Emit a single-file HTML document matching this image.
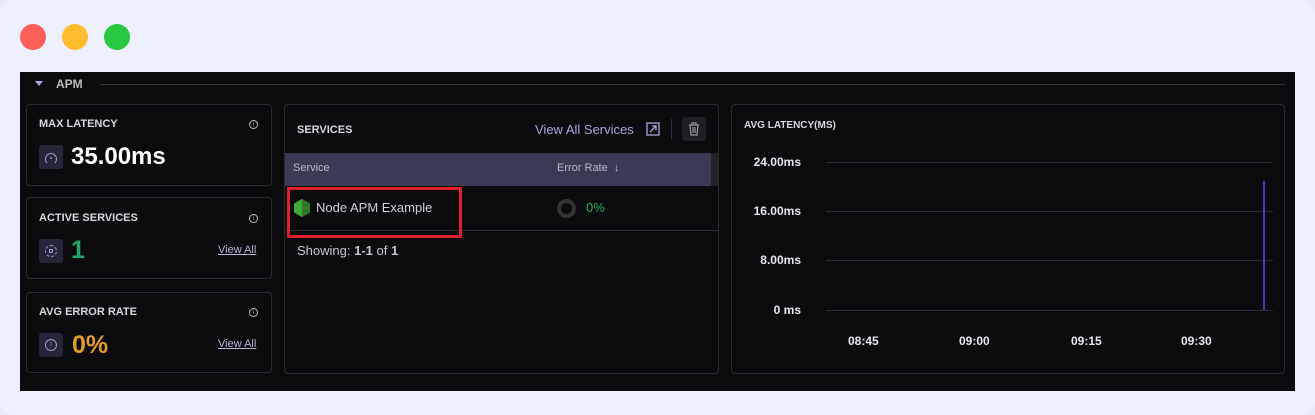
<!DOCTYPE html>
<html><head><style>
*{box-sizing:border-box;margin:0;padding:0}
body{width:1315px;height:415px;background:#e6e9f8;font-family:"Liberation Sans",sans-serif;position:relative;overflow:hidden}
.win{position:absolute;left:0;top:0;width:1315px;height:415px;background:#eef0fd;border-radius:14px}
.dot{position:absolute;top:24px;width:26px;height:26px;border-radius:50%}
.panel{position:absolute;left:20px;top:72px;width:1275px;height:319px;background:#0b0b0d}
.card{position:absolute;border:1px solid #2a2a30;border-radius:4px;background:#0b0b0d}
.t{position:absolute;color:#d8d8de;font-weight:bold;font-size:11px}
.ic{position:absolute;width:24px;height:24px;background:#26263a;border-radius:3px}
.info{position:absolute;width:9px;height:9px;border:1px solid #bbb;border-radius:50%;font-size:6px;color:#bbb;text-align:center;line-height:8px}
.va{position:absolute;color:#b8b8d8;font-size:11px;text-decoration:underline}
.lbl{position:absolute;color:#e8e8ee;font-size:12px;font-weight:bold;text-align:right}
.grid{position:absolute;left:826px;width:447px;height:1px;background:#2c2c34}
</style></head><body>
<div class="win"></div>
<div class="dot" style="left:20px;background:#fe5f57"></div>
<div class="dot" style="left:62px;background:#febc2e"></div>
<div class="dot" style="left:104px;background:#28c840"></div>
<div class="panel"></div>
<div style="position:absolute;left:35px;top:81px;width:0;height:0;border-left:4px solid transparent;border-right:4px solid transparent;border-top:5px solid #a8a8d8"></div>
<div class="t" style="left:56px;top:77px;font-size:12px;color:#bbb">APM</div>
<div style="position:absolute;left:100px;top:84px;width:1185px;height:1px;background:#333"></div>

<div class="card" style="left:26px;top:104px;width:246px;height:82px"></div>
<div class="t" style="left:39px;top:118px">MAX LATENCY</div>
<div class="info" style="left:249px;top:120px">i</div>
<div class="ic" style="left:39px;top:145px"><div style="position:absolute;left:6px;top:8px;width:12px;height:12px;border:1.5px solid #9a9ac8;border-radius:50%;border-bottom-color:transparent"></div><div style="position:absolute;left:11px;top:12px;width:2px;height:2px;background:#9a9ac8;border-radius:50%"></div></div>
<div style="position:absolute;left:71px;top:143px;font-size:24px;font-weight:bold;color:#fff">35.00ms</div>

<div class="card" style="left:26px;top:197px;width:246px;height:82px"></div>
<div class="t" style="left:39px;top:212px">ACTIVE SERVICES</div>
<div class="info" style="left:249px;top:214px">i</div>
<div class="ic" style="left:39px;top:239px"><div style="position:absolute;left:6px;top:6px;width:12px;height:12px;border:1.3px dashed #9a9ac8;border-radius:50%"></div><div style="position:absolute;left:10px;top:10px;width:4px;height:4px;border:1px solid #9a9ac8"></div></div>
<div style="position:absolute;left:71px;top:236px;font-size:25px;font-weight:bold;color:#1fa86a">1</div>
<div class="va" style="left:218px;top:244px">View All</div>

<div class="card" style="left:26px;top:292px;width:246px;height:81px"></div>
<div class="t" style="left:39px;top:306px">AVG ERROR RATE</div>
<div class="info" style="left:249px;top:308px">i</div>
<div class="ic" style="left:39px;top:333px"><div style="position:absolute;left:6px;top:6px;width:12px;height:12px;border:1.3px solid #9a9ac8;border-radius:50%;font-size:7px;color:#9a9ac8;text-align:center;line-height:10px">i</div></div>
<div style="position:absolute;left:72px;top:331px;font-size:25px;font-weight:bold;color:#e39a2e">0%</div>
<div class="va" style="left:218px;top:338px">View All</div>

<div class="card" style="left:284px;top:104px;width:435px;height:270px"></div>
<div class="t" style="left:297px;top:124px">SERVICES</div>
<div style="position:absolute;left:535px;top:122px;font-size:13px;color:#a8a8e0">View All Services</div>
<svg style="position:absolute;left:646px;top:122px" width="14" height="14" fill="none" stroke="#a8a8e0" stroke-width="1.3"><rect x="1" y="1" width="12" height="12"/><path d="M4 10L10 4M6 4h4v4"/></svg>
<div style="position:absolute;left:671px;top:119px;width:1px;height:20px;background:#333"></div>
<div style="position:absolute;left:682px;top:117px;width:24px;height:24px;background:#1e1e24;border-radius:3px"></div>
<svg style="position:absolute;left:688px;top:122px" width="12" height="14" fill="none" stroke="#999" stroke-width="1.2"><path d="M1 3h10M4 3V1h4v2M2 3l1 10h6l1-10M5 5v6M7 5v6"/></svg>
<div style="position:absolute;left:285px;top:153px;width:427px;height:33px;background:#3a3a56"></div>
<div style="position:absolute;left:711px;top:153px;width:7px;height:33px;background:#222"></div>
<div style="position:absolute;left:293px;top:162px;font-size:11px;color:#b8b8cc">Service</div>
<div style="position:absolute;left:557px;top:162px;font-size:11px;color:#b8b8cc">Error Rate &nbsp;↓</div>
<div style="position:absolute;left:285px;top:230px;width:433px;height:1px;background:#2a2a30"></div>
<div style="position:absolute;left:287px;top:187px;width:175px;height:51px;border:3px solid #e0202a"></div>
<svg style="position:absolute;left:294px;top:199px" width="16" height="18"><polygon points="8,0 16,4.5 16,13.5 8,18 0,13.5 0,4.5" fill="#3fa83a"/><polygon points="8,0 16,4.5 16,13.5 8,18" fill="#2c7a2a"/></svg>
<div style="position:absolute;left:316px;top:200px;font-size:13px;color:#d0d0d8">Node APM Example</div>
<div style="position:absolute;left:557px;top:199px;width:19px;height:19px;border:4px solid #333;border-radius:50%"></div>
<div style="position:absolute;left:586px;top:200px;font-size:13px;color:#2fb060">0%</div>
<div style="position:absolute;left:297px;top:243px;font-size:13px;color:#c8c8d0">Showing: <b>1-1</b> of <b>1</b></div>

<div class="card" style="left:731px;top:104px;width:554px;height:270px"></div>
<div class="t" style="left:744px;top:120px;font-size:10px">AVG LATENCY(MS)</div>
<div class="grid" style="top:162px"></div>
<div class="grid" style="top:211px"></div>
<div class="grid" style="top:260px"></div>
<div class="grid" style="top:310px"></div>
<div class="lbl" style="left:740px;width:61px;top:155px">24.00ms</div>
<div class="lbl" style="left:740px;width:61px;top:204px">16.00ms</div>
<div class="lbl" style="left:740px;width:61px;top:253px">8.00ms</div>
<div class="lbl" style="left:740px;width:61px;top:303px">0 ms</div>
<div style="position:absolute;left:1263px;top:181px;width:2px;height:129px;background:#4a3ab8"></div>
<div class="lbl" style="left:848px;top:334px">08:45</div>
<div class="lbl" style="left:959px;top:334px">09:00</div>
<div class="lbl" style="left:1071px;top:334px">09:15</div>
<div class="lbl" style="left:1181px;top:334px">09:30</div>
</body></html>
